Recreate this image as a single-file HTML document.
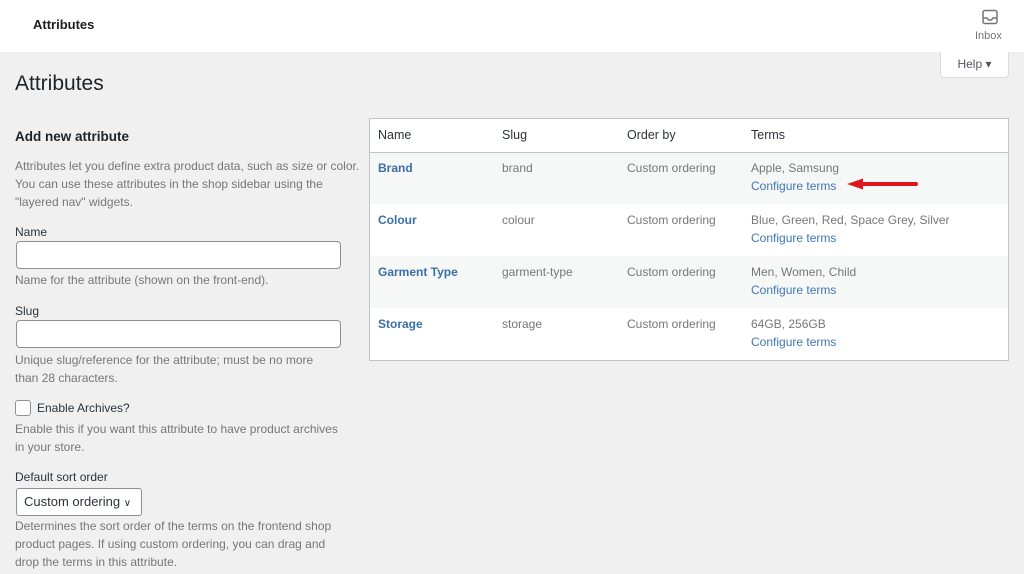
<!DOCTYPE html>
<html><head><style>
body{margin:0;width:1024px;height:574px;background:#f0f0f1;font-family:"Liberation Sans",sans-serif;position:relative;overflow:hidden;color:#3c434a}
.a{position:absolute;white-space:nowrap}
.s{font-size:12px;color:#777}
.l{font-size:12px;color:#2c3338}
.in{position:absolute;left:16px;width:323px;height:26px;background:#fff;border:1px solid #8c8f94;border-radius:4px}
</style></head><body>
<div class="a" style="left:0;top:0;width:1024px;height:52px;background:#fff"></div>
<div class="a" style="left:33px;top:17px;font-size:13px;font-weight:bold;color:#1e1e1e">Attributes</div>
<svg class="a" style="left:981px;top:9px" width="18" height="17" viewBox="0 0 18 17"><rect x="2" y="1.5" width="14" height="13" rx="2" fill="none" stroke="#757575" stroke-width="1.5"/><path d="M2 9h4l1.5 2h3l1.5-2h4" fill="none" stroke="#757575" stroke-width="1.5"/></svg>
<div class="a" style="left:975px;top:30px;font-size:11px;color:#757575">Inbox</div>
<div class="a" style="left:940px;top:52px;width:67px;height:25px;background:#fff;border:1px solid #dcdcde;border-top:none;border-radius:0 0 4px 4px;font-size:12px;color:#50575e;line-height:24px;text-align:center">Help ▾</div>
<div class="a" style="left:15px;top:72px;font-size:21px;color:#1d2327">Attributes</div>
<div class="a" style="left:15px;top:129px;font-size:13.5px;font-weight:bold;color:#1d2327">Add new attribute</div>
<div class="a s" style="left:15px;top:157px;line-height:18px">Attributes let you define extra product data, such as size or color.<br>You can use these attributes in the shop sidebar using the<br>"layered nav" widgets.</div>
<div class="a l" style="left:15px;top:225px">Name</div>
<div class="in" style="top:241px"></div>
<div class="a s" style="left:15px;top:273px">Name for the attribute (shown on the front-end).</div>
<div class="a l" style="left:15px;top:304px">Slug</div>
<div class="in" style="top:320px"></div>
<div class="a s" style="left:15px;top:351px;line-height:18px">Unique slug/reference for the attribute; must be no more<br>than 28 characters.</div>
<div class="a" style="left:15px;top:400px;width:14px;height:14px;border:1px solid #8c8f94;border-radius:3px;background:#fff"></div>
<div class="a l" style="left:37px;top:401px">Enable Archives?</div>
<div class="a s" style="left:15px;top:420px;line-height:18px">Enable this if you want this attribute to have product archives<br>in your store.</div>
<div class="a l" style="left:15px;top:470px">Default sort order</div>
<div class="a" style="left:16px;top:488px;width:124px;height:26px;background:#fff;border:1px solid #8c8f94;border-radius:3px;font-size:13px;color:#2c3338;line-height:26px;text-indent:7px">Custom ordering <span style="font-size:10px">&#8744;</span></div>
<div class="a s" style="left:15px;top:517px;line-height:18px">Determines the sort order of the terms on the frontend shop<br>product pages. If using custom ordering, you can drag and<br>drop the terms in this attribute.</div>

<div class="a" style="left:369px;top:118px;width:638px;height:241px;background:#fff;border:1px solid #c3c4c7"></div>
<div class="a" style="left:370px;top:152px;width:638px;height:1px;background:#c3c4c7"></div>
<div class="a" style="left:370px;top:153px;width:638px;height:51px;background:#f6f7f7"></div>
<div class="a" style="left:370px;top:256px;width:638px;height:52px;background:#f6f7f7"></div>
<div class="a" style="left:378px;top:128px;font-size:12.5px;color:#2c3338">Name</div>
<div class="a" style="left:502px;top:128px;font-size:12.5px;color:#2c3338">Slug</div>
<div class="a" style="left:627px;top:128px;font-size:12.5px;color:#2c3338">Order by</div>
<div class="a" style="left:751px;top:128px;font-size:12.5px;color:#2c3338">Terms</div>

<div class="a" style="left:378px;top:161px;font-size:12px;font-weight:bold;color:#3b6fa7">Brand</div>
<div class="a s" style="left:502px;top:161px">brand</div>
<div class="a s" style="left:627px;top:161px">Custom ordering</div>
<div class="a s" style="left:751px;top:159px;line-height:18px">Apple, Samsung<br><span style="color:#3f77b4">Configure terms</span></div>

<div class="a" style="left:378px;top:213px;font-size:12px;font-weight:bold;color:#3b6fa7">Colour</div>
<div class="a s" style="left:502px;top:213px">colour</div>
<div class="a s" style="left:627px;top:213px">Custom ordering</div>
<div class="a s" style="left:751px;top:211px;line-height:18px">Blue, Green, Red, Space Grey, Silver<br><span style="color:#3f77b4">Configure terms</span></div>

<div class="a" style="left:378px;top:265px;font-size:12px;font-weight:bold;color:#3b6fa7">Garment Type</div>
<div class="a s" style="left:502px;top:265px">garment-type</div>
<div class="a s" style="left:627px;top:265px">Custom ordering</div>
<div class="a s" style="left:751px;top:263px;line-height:18px">Men, Women, Child<br><span style="color:#3f77b4">Configure terms</span></div>

<div class="a" style="left:378px;top:317px;font-size:12px;font-weight:bold;color:#3b6fa7">Storage</div>
<div class="a s" style="left:502px;top:317px">storage</div>
<div class="a s" style="left:627px;top:317px">Custom ordering</div>
<div class="a s" style="left:751px;top:315px;line-height:18px">64GB, 256GB<br><span style="color:#3f77b4">Configure terms</span></div>

<svg class="a" style="left:845px;top:177px" width="75" height="14" viewBox="0 0 75 14"><path d="M16 7H71" stroke="#e0141b" stroke-width="4" stroke-linecap="round"/><path d="M2 7L18 1.5V12.5Z" fill="#e0141b"/></svg>
</body></html>
